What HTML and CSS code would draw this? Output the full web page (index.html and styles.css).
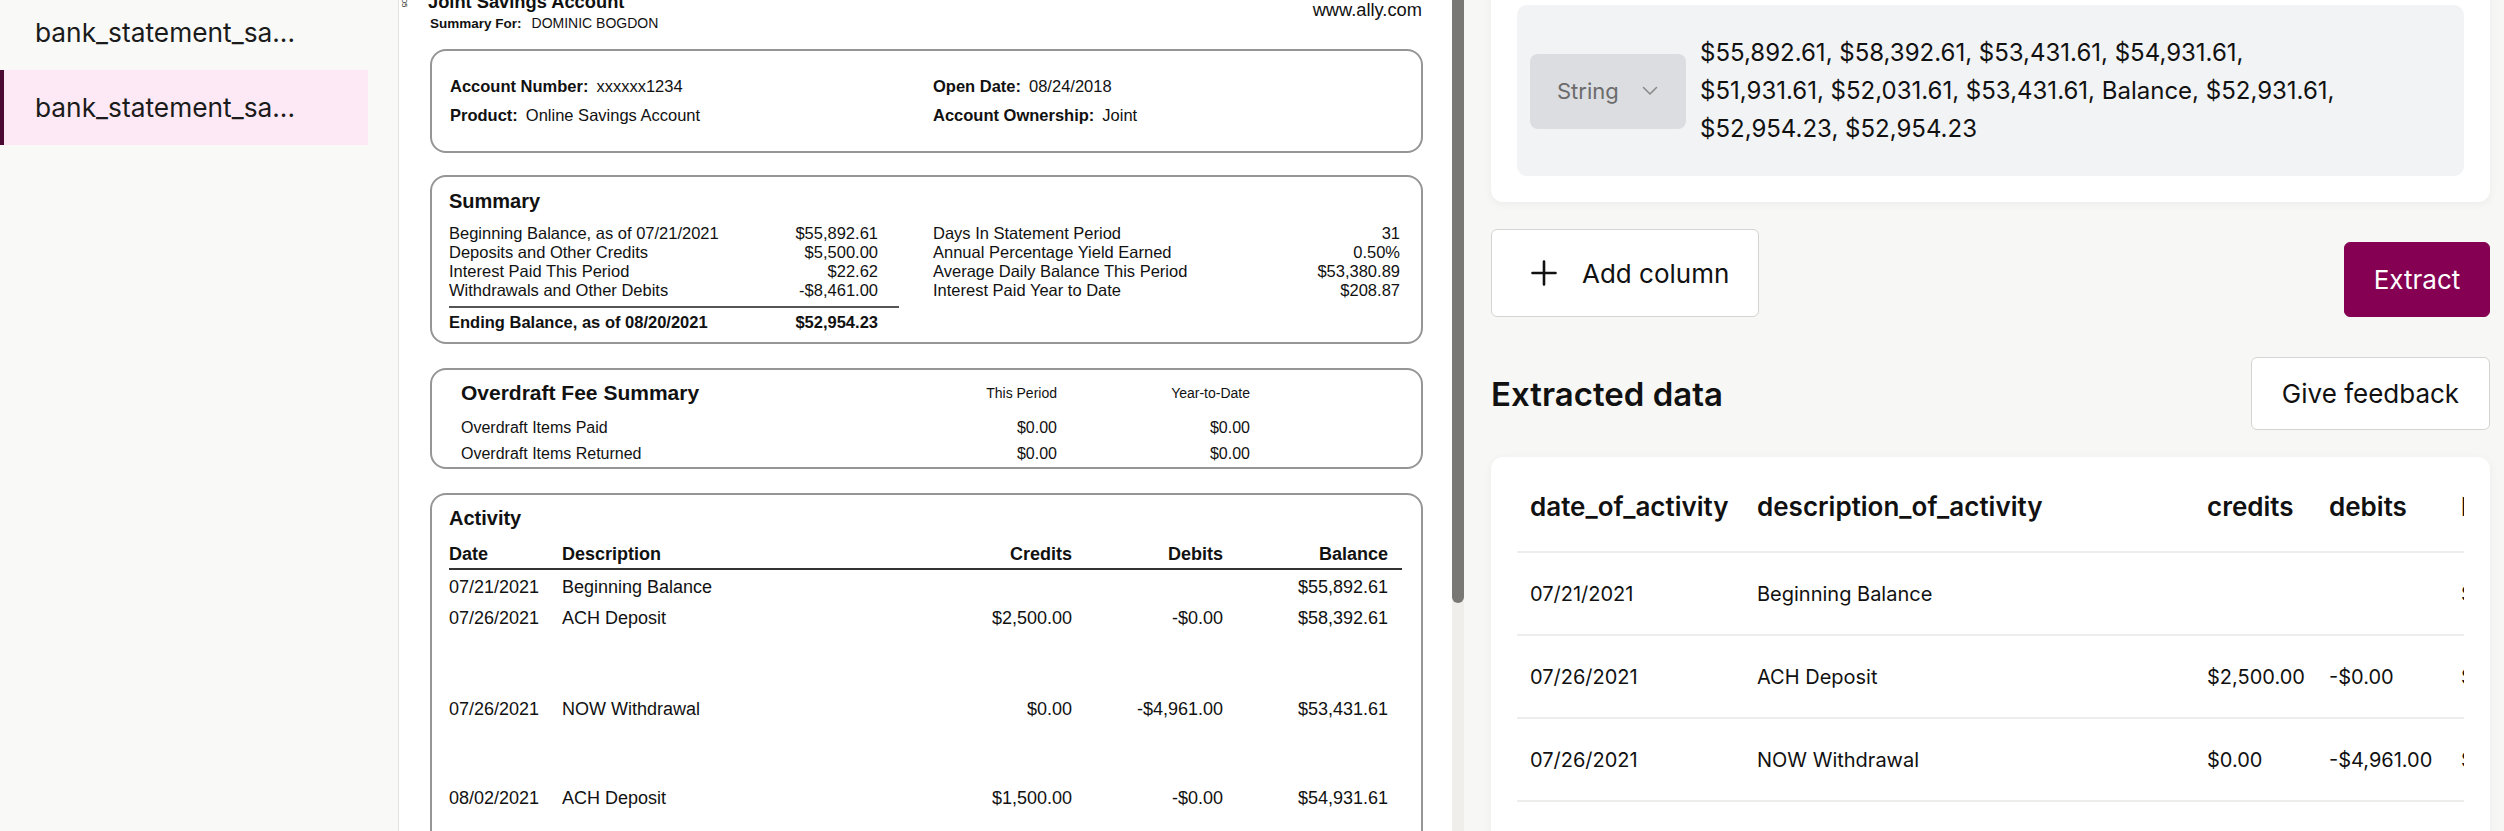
FILE: index.html
```html
<!DOCTYPE html>
<html lang="en">
<head>
<meta charset="utf-8">
<title>Extract</title>
<link rel="stylesheet" href="styles.css">
</head>
<body>
<div class="app">
  <aside class="sidebar">
    <div class="file">bank_statement_sa...</div>
    <div class="file active">bank_statement_sa...</div>
  </aside>

  <section class="viewer">
    <div class="page">
      <span class="margin-note">3.05</span>
      <header class="pdf-head">
        <div class="head-left">
          <div class="title">Joint Savings Account</div>
          <div class="summary-for"><b>Summary For:</b>DOMINIC BOGDON</div>
        </div>
        <div class="site">www.ally.com</div>
      </header>

      <div class="box account">
        <div><b>Account Number:</b>xxxxxx1234</div>
        <div><b>Open Date:</b>08/24/2018</div>
        <div><b>Product:</b>Online Savings Account</div>
        <div><b>Account Ownership:</b>Joint</div>
      </div>

      <div class="box summary">
        <h3 class="box-title">Summary</h3>
        <div class="sum-grid">
          <div class="sum-left">
            <div class="sum-row"><span>Beginning Balance, as of 07/21/2021</span><span>$55,892.61</span></div>
            <div class="sum-row"><span>Deposits and Other Credits</span><span>$5,500.00</span></div>
            <div class="sum-row"><span>Interest Paid This Period</span><span>$22.62</span></div>
            <div class="sum-row"><span>Withdrawals and Other Debits</span><span>-$8,461.00</span></div>
            <div class="sum-row total"><span>Ending Balance, as of 08/20/2021</span><span>$52,954.23</span></div>
          </div>
          <div class="sum-right">
            <div class="sum-row"><span>Days In Statement Period</span><span>31</span></div>
            <div class="sum-row"><span>Annual Percentage Yield Earned</span><span>0.50%</span></div>
            <div class="sum-row"><span>Average Daily Balance This Period</span><span>$53,380.89</span></div>
            <div class="sum-row"><span>Interest Paid Year to Date</span><span>$208.87</span></div>
          </div>
        </div>
      </div>

      <div class="box overdraft">
        <div class="od-row od-head"><span class="od-title">Overdraft Fee Summary</span><span class="od-col">This Period</span><span class="od-col">Year-to-Date</span></div>
        <div class="od-row"><span>Overdraft Items Paid</span><span class="od-val">$0.00</span><span class="od-val">$0.00</span></div>
        <div class="od-row"><span>Overdraft Items Returned</span><span class="od-val">$0.00</span><span class="od-val">$0.00</span></div>
      </div>

      <div class="box activity">
        <h3 class="box-title">Activity</h3>
        <div class="act-row act-head"><span>Date</span><span>Description</span><span class="num">Credits</span><span class="num">Debits</span><span class="num">Balance</span></div>
        <div class="act-row"><span>07/21/2021</span><span>Beginning Balance</span><span class="num"></span><span class="num"></span><span class="num">$55,892.61</span></div>
        <div class="act-row tall"><span>07/26/2021</span><span>ACH Deposit</span><span class="num">$2,500.00</span><span class="num">-$0.00</span><span class="num">$58,392.61</span></div>
        <div class="act-row tall2"><span>07/26/2021</span><span>NOW Withdrawal</span><span class="num">$0.00</span><span class="num">-$4,961.00</span><span class="num">$53,431.61</span></div>
        <div class="act-row"><span>08/02/2021</span><span>ACH Deposit</span><span class="num">$1,500.00</span><span class="num">-$0.00</span><span class="num">$54,931.61</span></div>
      </div>
    </div>
    <div class="scroll-track"><div class="scroll-thumb"></div></div>
  </section>

  <main class="panel">
    <div class="card values-card">
      <div class="value-box">
        <div class="type">
          <span>String</span>
          <svg class="chev" width="16" height="10" viewBox="0 0 16 10"><path d="M1.5 1.5 L8 8 L14.5 1.5" fill="none" stroke="#8a8a8a" stroke-width="1.6" stroke-linecap="round" stroke-linejoin="round"/></svg>
        </div>
        <div class="value-text">$55,892.61, $58,392.61, $53,431.61, $54,931.61,<br>$51,931.61, $52,031.61, $53,431.61, Balance, $52,931.61,<br>$52,954.23, $52,954.23</div>
      </div>
    </div>

    <div class="actions">
      <button class="btn add-btn">
        <svg width="26" height="26" viewBox="0 0 26 26"><path d="M13 1.5 V24.5 M1.5 13 H24.5" stroke="#111" stroke-width="2.6" stroke-linecap="round"/></svg>
        <span>Add column</span>
      </button>
      <button class="btn extract-btn">Extract</button>
    </div>

    <div class="results-head">
      <h2>Extracted data</h2>
      <button class="btn feedback-btn">Give feedback</button>
    </div>

    <div class="card table-card">
      <div class="table-scroll">
        <table>
          <colgroup><col class="c1"><col class="c2"><col class="c3"><col class="c4"><col class="c5"></colgroup>
          <thead>
            <tr><th>date_of_activity</th><th>description_of_activity</th><th>credits</th><th>debits</th><th>balance</th></tr>
          </thead>
          <tbody>
            <tr><td>07/21/2021</td><td>Beginning Balance</td><td></td><td></td><td>$55,892.61</td></tr>
            <tr><td>07/26/2021</td><td>ACH Deposit</td><td>$2,500.00</td><td>-$0.00</td><td>$58,392.61</td></tr>
            <tr><td>07/26/2021</td><td>NOW Withdrawal</td><td>$0.00</td><td>-$4,961.00</td><td>$53,431.61</td></tr>
            <tr><td>08/02/2021</td><td>ACH Deposit</td><td>$1,500.00</td><td>-$0.00</td><td>$54,931.61</td></tr>
          </tbody>
        </table>
      </div>
    </div>
  </main>
</div>
</body>
</html>
```

FILE: styles.css
```css
* { box-sizing: border-box; }

html, body {
  margin: 0;
  width: 2504px;
  height: 831px;
  overflow: hidden;
}

body {
  font-family: Inter, "Noto Sans", sans-serif;
  background: #f7f7f5;
  color: #111;
}

.app {
  display: flex;
  width: 2504px;
  height: 831px;
  overflow: hidden;
}

/* ---------- sidebar ---------- */
.sidebar {
  width: 399px;
  flex: none;
  background: #f9f9f8;
  border-right: 1px solid #e2e2e0;
}

.file {
  width: 368px;
  height: 75px;
  display: flex;
  align-items: center;
  padding-left: 35px;
  font-size: 26.3px;
  color: #1b1b1b;
  white-space: nowrap;
}

.file:first-child { margin-top: -5px; }

.file.active {
  background: #fde9f5;
  border-left: 4px solid #4b0a34;
  padding-left: 31px;
}

/* ---------- pdf viewer ---------- */
.viewer {
  width: 1065px;
  flex: none;
  position: relative;
  background: #fff;
  overflow: hidden;
}

.page {
  position: relative;
  padding: 0 41px 0 31px;
  font-family: "Liberation Sans", Arial, sans-serif;
  color: #111;
}

.margin-note {
  position: absolute;
  left: 1px;
  top: 0;
  writing-mode: vertical-rl;
  font-size: 8px;
  line-height: 8px;
  color: #222;
}

.pdf-head {
  display: flex;
  justify-content: space-between;
  align-items: flex-start;
  margin-top: -8px;
}

.title {
  font-weight: bold;
  font-size: 18.3px;
  line-height: 20px;
  margin-left: -2px;
}

.summary-for {
  font-size: 14px;
  line-height: 16px;
  margin-top: 3px;
}

.summary-for b {
  font-size: 13.5px;
  margin-right: 10px;
}

.site {
  font-size: 18.3px;
  line-height: 20px;
  margin-top: 8px;
  margin-right: 1px;
}

.box {
  border: 2px solid #969696;
  border-radius: 16px;
}

.account {
  margin-top: 17px;
  height: 104px;
  padding: 21px 0 0 18px;
  display: grid;
  grid-template-columns: 483px 1fr;
  grid-auto-rows: 29px;
  align-items: center;
  font-size: 16.5px;
}

.account b { margin-right: 8px; }

.box-title {
  margin: 0;
  font-size: 20px;
  line-height: 24px;
  font-weight: bold;
}

.summary {
  margin-top: 22px;
  height: 169px;
  padding: 12px 19px 0 17px;
  font-size: 16.5px;
}

.summary .box-title { margin-bottom: 11px; }

.sum-grid {
  display: grid;
  grid-template-columns: 450px 1fr;
  column-gap: 34px;
}

.sum-row {
  display: flex;
  justify-content: space-between;
  line-height: 19px;
  white-space: nowrap;
}

.sum-left .sum-row { padding-right: 21px; }
.sum-right .sum-row { padding-right: 2px; }

.sum-row.total {
  margin-top: 6px;
  border-top: 2px solid #555;
  padding-top: 2px;
  line-height: 24px;
  font-weight: bold;
}

.overdraft {
  margin-top: 24px;
  height: 101px;
  padding: 10px 0 0 17px;
  font-size: 16px;
}

.od-row {
  display: grid;
  grid-template-columns: 1fr 120px 193px 171px;
  line-height: 26px;
  align-items: center;
}

.od-row span:first-child { padding-left: 12px; }

.od-head { margin-bottom: 9px; }

.od-title {
  font-weight: bold;
  font-size: 21px;
}

.od-col, .od-val { text-align: right; }
.od-col { font-size: 14px; }

.activity {
  margin-top: 24px;
  height: 400px;
  padding: 11px 19px 0 17px;
  font-size: 18px;
}

.activity .box-title { margin-bottom: 10px; }

.act-row {
  display: grid;
  grid-template-columns: 113px 1fr 120px 151px 179px;
  line-height: 31px;
  white-space: nowrap;
}

.act-row .num { text-align: right; }
.act-row .num:last-child { padding-right: 14px; }
.act-row.tall { padding-bottom: 60px; }
.act-row.tall2 { padding-bottom: 58px; }

.act-head {
  font-weight: bold;
  line-height: 28px;
  border-bottom: 2px solid #333;
  margin-bottom: 2px;
}

.scroll-track {
  position: absolute;
  top: 0;
  right: 0;
  width: 12px;
  height: 100%;
  background: #efeeeb;
}

.scroll-thumb {
  height: 603px;
  background: #7a7874;
  border-radius: 0 0 6px 6px;
}

/* ---------- right panel ---------- */
.panel {
  flex: 1;
  min-width: 0;
  padding: 0 14px 0 27px;
  background: #f7f7f5;
}

.card {
  background: #fff;
  border-radius: 12px;
  box-shadow: 0 2px 10px rgba(0, 0, 0, 0.05);
}

.values-card {
  margin-top: -21px;
  padding: 26px;
}

.value-box {
  background: #f2f3f5;
  border-radius: 10px;
  display: flex;
  align-items: center;
  gap: 14px;
  padding: 29px 20px 28px 13px;
}

.type {
  width: 156px;
  height: 75px;
  flex: none;
  background: #dcdde1;
  border-radius: 8px;
  display: flex;
  align-items: center;
  justify-content: space-between;
  padding: 0 28px 0 27px;
  font-size: 22px;
  color: #6b6b6b;
}

.value-text {
  font-size: 24px;
  line-height: 38px;
  color: #111;
  white-space: nowrap;
}

.actions {
  margin-top: 27px;
  display: flex;
  justify-content: space-between;
  align-items: flex-end;
}

.btn {
  font-family: Inter, "Noto Sans", sans-serif;
  font-size: 26px;
  color: #111;
  background: #fff;
  border: 1px solid #d4d4d2;
  border-radius: 6px;
  padding: 0;
  cursor: pointer;
}

.add-btn {
  width: 268px;
  height: 88px;
  display: flex;
  align-items: center;
  gap: 25px;
  padding-left: 39px;
}

.extract-btn {
  width: 146px;
  height: 75px;
  background: #850052;
  border-color: #850052;
  color: #fff;
}

.results-head {
  margin-top: 40px;
  display: flex;
  justify-content: space-between;
  align-items: center;
}

.results-head h2 {
  margin: 0;
  font-size: 33px;
  font-weight: 600;
  color: #111;
}

.feedback-btn {
  width: 239px;
  height: 73px;
}

.table-card {
  margin-top: 27px;
  height: 400px;
  padding: 0 26px;
}

.table-scroll {
  overflow: hidden;
  width: 100%;
}

table {
  border-collapse: collapse;
  table-layout: fixed;
  width: 1131px;
}

col.c1 { width: 227px; }
col.c2 { width: 450px; }
col.c3 { width: 122px; }
col.c4 { width: 132px; }
col.c5 { width: 200px; }

th {
  height: 95px;
  padding: 5px 13px 0;
  text-align: left;
  font-size: 26px;
  font-weight: 600;
  color: #111;
  white-space: nowrap;
  border-bottom: 2px solid #ededeb;
}

td {
  height: 83px;
  padding: 0 13px;
  font-size: 20px;
  color: #111;
  white-space: nowrap;
  border-bottom: 2px solid #ededeb;
}
```
